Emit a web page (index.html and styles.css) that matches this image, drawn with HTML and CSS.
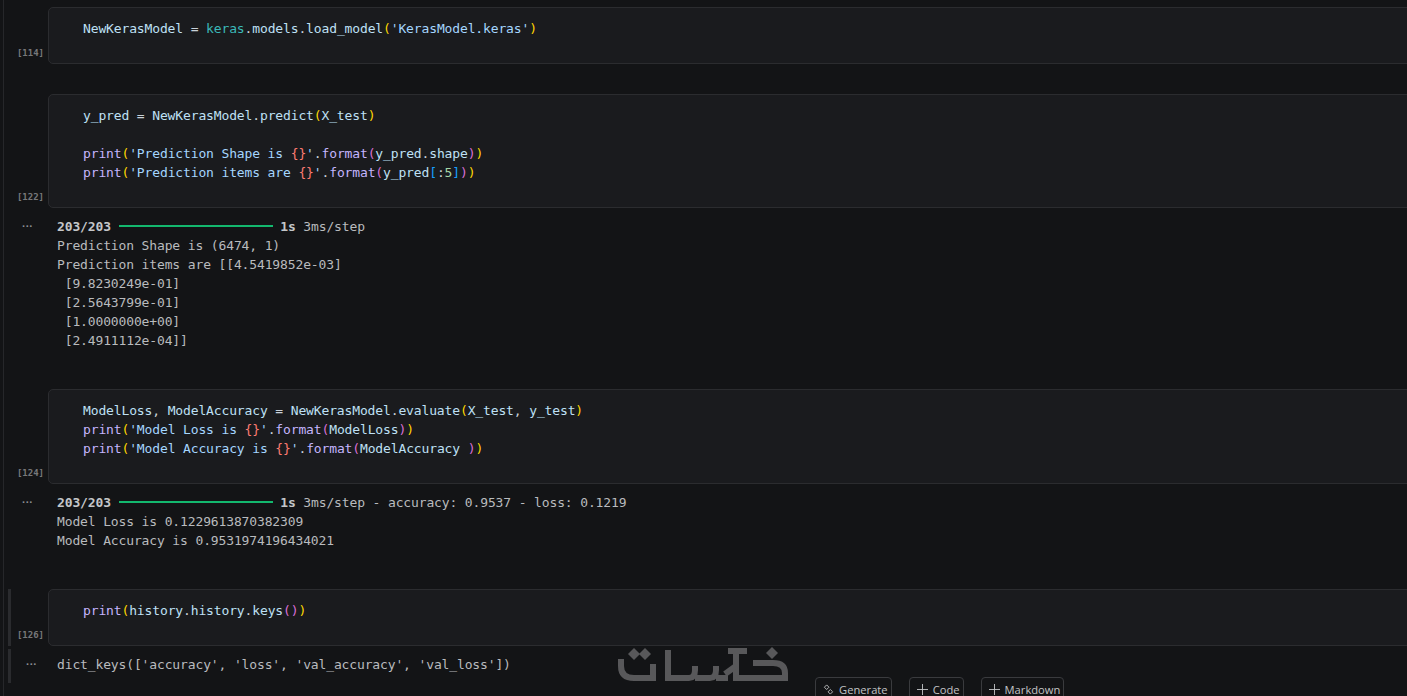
FILE: index.html
```html
<!DOCTYPE html>
<html lang="en">
<head>
  <meta charset="UTF-8">
  <title>Notebook</title>
  <link rel="stylesheet" href="styles.css">
</head>
<body>

  <main class="notebook">

    <section class="cell">
      <div class="row">
        <div class="gutter"><span class="count">[114]</span></div>
        <pre class="editor"><span class="v">NewKerasModel</span> = <span class="m">keras</span>.<span class="v">models</span>.<span class="v">load_model</span><span class="b1">(</span><span class="s">'KerasModel.keras'</span><span class="b1">)</span></pre>
      </div>
    </section>

    <section class="cell">
      <div class="row">
        <div class="gutter"><span class="count">[122]</span></div>
        <pre class="editor"><span class="v">y_pred</span> = <span class="v">NewKerasModel</span>.<span class="v">predict</span><span class="b1">(</span><span class="v">X_test</span><span class="b1">)</span>

<span class="f">print</span><span class="b1">(</span><span class="s">'Prediction Shape is </span><span class="o">{}</span><span class="s">'</span>.<span class="f">format</span><span class="b2">(</span><span class="v">y_pred</span>.<span class="v">shape</span><span class="b2">)</span><span class="b1">)</span>
<span class="f">print</span><span class="b1">(</span><span class="s">'Prediction items are </span><span class="o">{}</span><span class="s">'</span>.<span class="f">format</span><span class="b2">(</span><span class="v">y_pred</span><span class="b3">[</span>:<span class="n">5</span><span class="b3">]</span><span class="b2">)</span><span class="b1">)</span></pre>
      </div>
      <div class="row output">
        <div class="gutter"><span class="dots">···</span></div>
        <pre class="stream"><b>203/203</b> <span class="progress"></span> <b>1s</b> 3ms/step
Prediction Shape is (6474, 1)
Prediction items are [[4.5419852e-03]
 [9.8230249e-01]
 [2.5643799e-01]
 [1.0000000e+00]
 [2.4911112e-04]]</pre>
      </div>
    </section>

    <section class="cell">
      <div class="row">
        <div class="gutter"><span class="count">[124]</span></div>
        <pre class="editor"><span class="v">ModelLoss</span>, <span class="v">ModelAccuracy</span> = <span class="v">NewKerasModel</span>.<span class="v">evaluate</span><span class="b1">(</span><span class="v">X_test</span>, <span class="v">y_test</span><span class="b1">)</span>
<span class="f">print</span><span class="b1">(</span><span class="s">'Model Loss is </span><span class="o">{}</span><span class="s">'</span>.<span class="f">format</span><span class="b2">(</span><span class="v">ModelLoss</span><span class="b2">)</span><span class="b1">)</span>
<span class="f">print</span><span class="b1">(</span><span class="s">'Model Accuracy is </span><span class="o">{}</span><span class="s">'</span>.<span class="f">format</span><span class="b2">(</span><span class="v">ModelAccuracy</span> <span class="b2">)</span><span class="b1">)</span></pre>
      </div>
      <div class="row output">
        <div class="gutter"><span class="dots">···</span></div>
        <pre class="stream"><b>203/203</b> <span class="progress"></span> <b>1s</b> 3ms/step - accuracy: 0.9537 - loss: 0.1219
Model Loss is 0.1229613870382309
Model Accuracy is 0.9531974196434021</pre>
      </div>
    </section>

    <section class="cell active">
      <div class="row">
        <div class="gutter"><span class="count">[126]</span></div>
        <pre class="editor"><span class="f">print</span><span class="b1">(</span><span class="v">history</span>.<span class="v">history</span>.<span class="v">keys</span><span class="b2">(</span><span class="b2">)</span><span class="b1">)</span></pre>
      </div>
      <div class="row output">
        <div class="gutter"><span class="dots">···</span></div>
        <pre class="stream">dict_keys(['accuracy', 'loss', 'val_accuracy', 'val_loss'])</pre>
      </div>
    </section>

  </main>

  <!-- watermark logo -->
  <svg class="watermark" viewBox="0 0 190 50" aria-hidden="true">
    <g fill="none" stroke="currentColor" stroke-width="6">
      <path d="M11 19 V26 Q11 38 24 38 H43 V24"/>
      <path d="M58 10 V41"/>
      <path d="M58 38 H79 Q85 38 85 30 V26 M85 38 H100 Q106 38 106 30 V26 M106 38 H118"/>
      <path d="M118 11 H137 M126 11 V41"/>
      <path d="M115 34 L126 26"/>
      <path d="M126 38 H175 V33 Q175 23 163 23 H143"/>
    </g>
    <g fill="currentColor">
      <path d="M24 8 L30 14 L24 20 L18 14 Z"/>
      <path d="M35 8 L41 14 L35 20 L29 14 Z"/>
      <path d="M162 7 L168 13 L162 19 L156 13 Z"/>
    </g>
  </svg>

  <!-- add-cell toolbar -->
  <div class="toolbar">
    <div class="add-btn">
      <svg class="add-icon" viewBox="0 0 12 12" aria-hidden="true">
        <path d="M4 1 L6.500 3.500 L4 6 L1.500 3.500 Z M8 6 L10.500 8.500 L8 11 L5.500 8.500 Z" fill="none" stroke="currentColor"/>
      </svg>
      Generate
    </div>
    <div class="add-btn">
      <svg class="add-icon" viewBox="0 0 12 12" aria-hidden="true"><path d="M6 0 V12 M0 6 H12" stroke="currentColor"/></svg>
      Code
    </div>
    <div class="add-btn">
      <svg class="add-icon" viewBox="0 0 12 12" aria-hidden="true"><path d="M6 0 V12 M0 6 H12" stroke="currentColor"/></svg>
      Markdown
    </div>
  </div>

</body>
</html>
```

FILE: styles.css
```css
html, body {
  height: 100%;
  margin: 0;
  overflow: hidden;
  background-color: #131416;
}

.notebook {
  margin-left: 3px;
  margin-right: -10px;
  padding-top: 7px;
  min-height: 100%;
  border-left: 1px solid #26272a;
}

.cell {
  margin-bottom: 30px;
}

.row {
  display: flex;
}

.gutter {
  display: flex;
  flex: none;
  width: 44px;
  align-items: flex-end;
}

.active .gutter::before {
  content: '';
  flex: none;
  align-self: stretch;
  width: 3px;
  margin-left: 4px;
  background-color: #2a2b2e;
}

.active .output .gutter::before {
  margin-top: 3px;
}

.count {
  margin-left: auto;
  padding-right: 4px;
  padding-bottom: 5px;
  font-family: "DejaVu Sans Mono", monospace;
  font-size: 9px;
  font-weight: bold;
  line-height: 12px;
  color: #77787a;
}

.editor, .stream {
  margin: 0;
  font-family: "DejaVu Sans Mono", monospace;
  font-size: 13px;
  letter-spacing: -0.135px;
  line-height: 19px;
}

.editor {
  flex: 1;
  padding: 11px 0 25px 34px;
  border: 1px solid #2b2c2f;
  border-radius: 5px;
  background-color: #1a1b1e;
  color: #c9d1d9;
}

.output .gutter {
  width: 53px;
  align-items: flex-start;
}

.stream {
  flex: 1;
  padding: 9px 0;
  color: #b9bbbe;
}

.stream b {
  color: #c4c6c9;
}

.dots {
  padding: 9px 0 0 18px;
  font-family: "Liberation Sans", sans-serif;
  font-size: 11px;
  font-weight: bold;
  line-height: 19px;
  color: #8c8d90;
}

.active .output .dots {
  padding-left: 15px;
}

.progress {
  display: inline-block;
  width: 154px;
  height: 2px;
  vertical-align: 4px;
  background-color: #13b86e;
}

/* syntax colours */
.v { color: #bfe0f5; }
.m { color: #3bb8b8; }
.s { color: #a5d6ff; }
.f { color: #c4b5fd; }
.o { color: #ff7b72; }
.n { color: #a5d6a7; }
.b1 { color: #ffd700; }
.b2 { color: #da70d6; }
.b3 { color: #179fff; }

.watermark {
  position: absolute;
  left: 610px;
  top: 640px;
  width: 190px;
  height: 50px;
  color: #58585a;
}

.toolbar {
  position: absolute;
  left: 815px;
  top: 677px;
  display: flex;
  gap: 17px;
}

.add-btn {
  display: flex;
  align-items: center;
  gap: 5px;
  height: 23px;
  padding: 0 3px 2px 7px;
  border: 1px solid #3a3b3e;
  border-radius: 4px;
  font-family: "Open Sans", sans-serif;
  font-size: 11.2px;
  line-height: 14px;
  color: #c2c3c5;
}

.add-icon {
  width: 11px;
  height: 11px;
}
```
